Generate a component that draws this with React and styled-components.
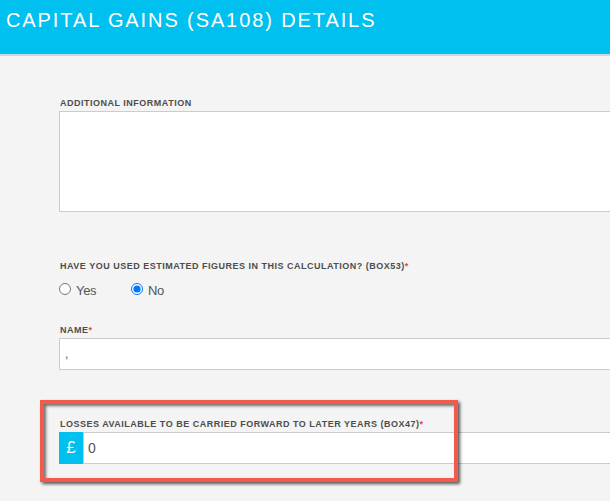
import styled, { createGlobalStyle } from 'styled-components'

const GlobalStyle = createGlobalStyle`
  html, body {
    margin: 0;
    padding: 0;
    background: #f4f4f4;
    overflow: hidden;
    font-family: "Liberation Sans", Arial, sans-serif;
  }
`

export default function App() {
  return (
    <Page>
      <GlobalStyle />
      <Header>
        <Title>CAPITAL GAINS (SA108) DETAILS</Title>
      </Header>
      <Form>
        <Field $top={41}>
          <Label>Additional information</Label>
          <TextArea />
        </Field>

        <Field $top={48}>
          <Label>
            Have you used estimated figures in this calculation? (BOX53)
            <Required>*</Required>
          </Label>
          <RadioRow>
            <RadioOption>
              <Radio type="radio" name="box53" />
              <span>Yes</span>
            </RadioOption>
            <RadioOption>
              <Radio type="radio" name="box53" defaultChecked />
              <span>No</span>
            </RadioOption>
          </RadioRow>
        </Field>

        <Field $top={25}>
          <Label>
            Name<Required>*</Required>
          </Label>
          <TextInput defaultValue="," $small />
        </Field>

        <Field $top={48}>
          <Label>
            Losses available to be carried forward to later years (BOX47)
            <Required>*</Required>
          </Label>
          <InputGroup>
            <Addon>£</Addon>
            <TextInput defaultValue="0" />
          </InputGroup>
        </Field>
      </Form>
      <Highlight />
    </Page>
  )
}

const Page = styled.div`
  position: relative;
  width: 610px;
  height: 501px;
  overflow: hidden;
  background: #f4f4f4;
`

const Header = styled.header`
  box-sizing: border-box;
  height: 56px;
  padding: 10px 0 0 6px;
  background: #00c0ef;
  border-bottom: 2px solid #d2d6de;
`

const Title = styled.h1`
  margin: 0;
  font-size: 20px;
  line-height: 20px;
  font-weight: normal;
  color: #fff;
  letter-spacing: 1.9px;
`

const Form = styled.div`
  display: flex;
  flex-direction: column;
  padding-left: 59px;
  width: 640px;
`

const Field = styled.div`
  display: flex;
  flex-direction: column;
  margin-top: ${(props) => props.$top}px;
`

const Label = styled.label`
  display: block;
  margin: 0 0 2px 1px;
  font-size: 9px;
  line-height: 12px;
  font-weight: bold;
  letter-spacing: 0.5px;
  text-transform: uppercase;
  color: #4d4d4d;
`

const Required = styled.span`
  color: #dd4b39;
`

const TextArea = styled.textarea`
  box-sizing: border-box;
  height: 101px;
  width: 100%;
  resize: none;
  border: 1px solid #ccc;
  background: #fff;
  outline: none;
`

const RadioRow = styled.div`
  display: flex;
  margin-top: 9px;
`

const RadioOption = styled.label`
  display: flex;
  align-items: flex-start;
  gap: 5px;
  min-width: 72px;
  font-size: 13px;
  line-height: 16px;
  color: #555;
  letter-spacing: -0.3px;
`

const Radio = styled.input`
  width: 12px;
  height: 12px;
  margin: 0;
`

const InputGroup = styled.div`
  display: flex;
  width: 100%;
`

const Addon = styled.span`
  display: flex;
  align-items: center;
  justify-content: center;
  flex: 0 0 24px;
  height: 32px;
  background: #00c0ef;
  color: #fff;
  font-size: 17px;
`

const TextInput = styled.input`
  box-sizing: border-box;
  flex: 1 1 auto;
  min-width: 0;
  width: 100%;
  height: 32px;
  padding: 0 ${(props) => (props.$small ? 5 : 4)}px;
  border: 1px solid #ccc;
  background: #fff;
  outline: none;
  font-family: "Liberation Sans", Arial, sans-serif;
  font-size: ${(props) => (props.$small ? 12 : 14)}px;
  color: #555;
`

const Highlight = styled.div`
  position: absolute;
  left: 40px;
  top: 400px;
  width: 418px;
  height: 82px;
  box-sizing: border-box;
  border: 4px solid #f25b4c;
  box-shadow: 2px 2px 3px rgba(0, 0, 0, 0.65),
    inset 2px 2px 3px rgba(0, 0, 0, 0.55);
  pointer-events: none;
`
